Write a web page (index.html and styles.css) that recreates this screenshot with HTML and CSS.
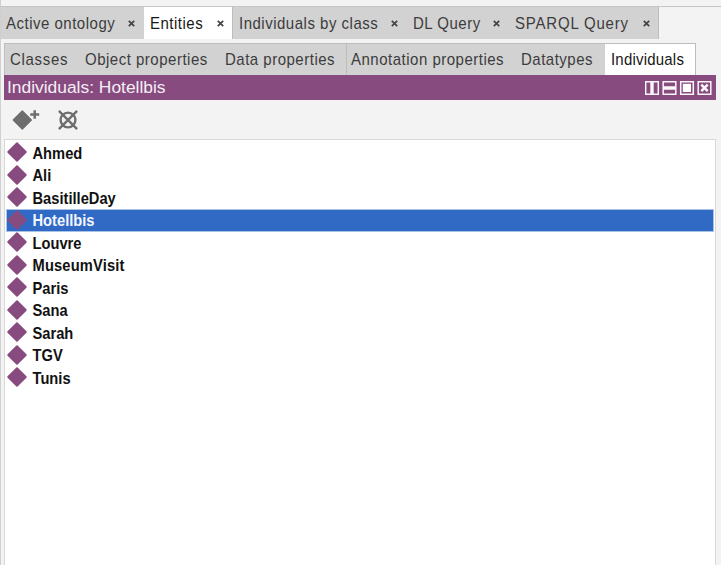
FILE: index.html
```html
<!DOCTYPE html>
<html lang="en">
<head>
<meta charset="utf-8">
<title>Individuals</title>
<link rel="stylesheet" href="styles.css">
</head>
<body>
<svg class="defs" width="0" height="0"><symbol id="x" viewBox="0 0 7 7"><path d="M.8 .8l5.4 5.4M6.2 .8L.8 6.2" stroke="currentColor" stroke-width="1.7"/></symbol>
<symbol id="d" viewBox="0 0 20 20"><path d="M10 1.2L18.8 10 10 18.8 1.2 10z" fill="currentColor" stroke="currentColor" stroke-width="1.8" stroke-linejoin="round"/></symbol></svg>
<nav class="tabs">
<div class="tab active-ontology"><span>Active ontology</span><svg><use href="#x"/></svg></div>
<div class="tab entities on"><span>Entities</span><svg><use href="#x"/></svg></div>
<div class="tab by-class"><span>Individuals by class</span><svg><use href="#x"/></svg></div>
<div class="tab dl"><span>DL Query</span><svg><use href="#x"/></svg></div>
<div class="tab sparql"><span>SPARQL Query</span><svg><use href="#x"/></svg></div>
</nav>
<main>
<nav class="subtabs">
<div class="sub classes"><span>Classes</span></div>
<div class="sub object"><span>Object properties</span></div>
<div class="sub data"><span>Data properties</span></div>
<div class="sub annotation"><span>Annotation properties</span></div>
<div class="sub datatypes"><span>Datatypes</span></div>
<div class="sub individuals on"><span>Individuals</span></div>
</nav>
<header><span>Individuals: Hotellbis</span>
<svg class="controls" width="68" height="14" viewBox="0 0 68 14" fill="none" stroke="#fbf6fa" stroke-width="1.5"><path d="M.7.7h12.6v12.6H.7zM18.2.7h12.6v12.6H18.2zM35.7.7h12.6v12.6H35.7zM53.2.7h12.6v12.6H53.2z"/><path d="M7 1v12M18 7h13" stroke-width="3.4"/><path d="M37.8 2.8h8.2v8.2h-8.2z" fill="#fff" stroke="none"/><path d="M56.3 3.7l6.4 6.4m0-6.4l-6.4 6.4" stroke-width="2.6"/></svg></header>
<div class="tools">
<svg width="28" height="22" viewBox="0 0 28 22"><path d="M10.3 2L19.3 11l-9 9-9-9z" fill="#6e6e6e" stroke="#6e6e6e" stroke-width="1.4" stroke-linejoin="round"/><path d="M22.7 1.3v8.4M18.2 5.5h9" stroke="#6e6e6e" stroke-width="2.5"/></svg>
<svg class="delete" width="20" height="20" viewBox="0 0 20 20" fill="none" stroke="#6e6e6e"><circle cx="10" cy="10" r="7.4" stroke-width="2.4"/><path d="M.9.9l18.2 18.2M19.1.9L.9 19.1" stroke-width="2.4"/></svg>
</div>
<ul>
<li><svg><use href="#d"/></svg><span>Ahmed</span></li>
<li><svg><use href="#d"/></svg><span>Ali</span></li>
<li><svg><use href="#d"/></svg><span>BasitilleDay</span></li>
<li class="selected"><svg><use href="#d"/></svg><span>Hotellbis</span></li>
<li><svg><use href="#d"/></svg><span>Louvre</span></li>
<li><svg><use href="#d"/></svg><span class="wide">MuseumVisit</span></li>
<li><svg><use href="#d"/></svg><span>Paris</span></li>
<li><svg><use href="#d"/></svg><span>Sana</span></li>
<li><svg><use href="#d"/></svg><span>Sarah</span></li>
<li><svg><use href="#d"/></svg><span>TGV</span></li>
<li><svg><use href="#d"/></svg><span>Tunis</span></li>
</ul>
</main>
</body>
</html>
```
FILE: styles.css
```css
* { box-sizing: border-box; }
body { margin: 0; width: 721px; height: 565px; overflow: hidden; padding-top: 6px; background: #f3f3f3; font: 15px "Liberation Sans", sans-serif; color: #3c3c3c; display: flex; flex-direction: column; border-left: 1px solid #d0d0d0; }
.defs { display: none; }
.tabs { display: flex; height: 33px; border-top: 1px solid #c5c5c5; flex: none; letter-spacing: .5px; margin-left: -1px; }
.tab { display: flex; align-items: center; justify-content: space-between; background: #d2d2d2; padding: 0 9px 0 6px; height: 32px; white-space: nowrap; }
.tab span, .sub span { display: inline-block; transform: translateY(-1px) scaleY(1.12); }
.tab svg { width: 7px; height: 7px; color: #444; margin-top: 1px; }
.on { background: #fff; color: #171717; }
.active-ontology { width: 144px; border-left: 1px solid #b5b5b5; padding-left: 5px; }
.entities { width: 88px; padding-right: 8px; }
.by-class { width: 175px; border-left: 1px solid #bdbdbd; }
.dl { width: 102px; }
.sparql { width: 150px; border-right: 1px solid #bdbdbd; padding-right: 8px; letter-spacing: .8px; }
main { margin: 4px 5px 0 3px; flex: 1; display: flex; flex-direction: column; }
.subtabs { display: flex; height: 32px; width: 692px; border: 1px solid #bdbdbd; border-bottom: 0; letter-spacing: .5px; flex: none; }
.sub { background: #d2d2d2; height: 31px; line-height: 32px; padding-left: 6px; white-space: nowrap; }
.sub.on { background: #fff; }
.classes { width: 75px; padding-left: 5px; letter-spacing: .7px; }
.object { width: 139px; padding-left: 5px; }
.data { width: 127px; }
.annotation { width: 170px; border-left: 1px solid #bdbdbd; padding-left: 4px; }
.datatypes { width: 89px; padding-left: 5px; }
.individuals { flex: 1; letter-spacing: .2px; }
header { height: 25px; width: 712px; background: #874b80; color: #f6eef5; font-size: 17.4px; line-height: 25px; padding: 0 3px; display: flex; justify-content: space-between; align-items: center; flex: none; }
.controls { margin-top: 1px; }
.tools { height: 39px; display: flex; padding: 9px 0 0 8px; flex: none; }
.delete { margin: 1px 0 0 18px; }
ul { list-style: none; margin: 0; padding: 1.5px 1px 0 1px; background: #fff; border: 1px solid #d8d8d8; border-bottom: 0; flex: 1; font-size: 14.7px; font-weight: bold; color: #111; }
li { height: 22.5px; display: flex; align-items: center; gap: 5.5px; padding-left: 1px; }
li span { transform: translateY(1px) scaleY(1.07); }
.wide { letter-spacing: .15px; }
li svg { width: 20px; height: 20px; color: #874b80; margin-top: -1px; }
.selected { background: #316ac5; color: #f4f6ff; outline: 1px solid #a9c2e8; outline-offset: -1px; }
```
